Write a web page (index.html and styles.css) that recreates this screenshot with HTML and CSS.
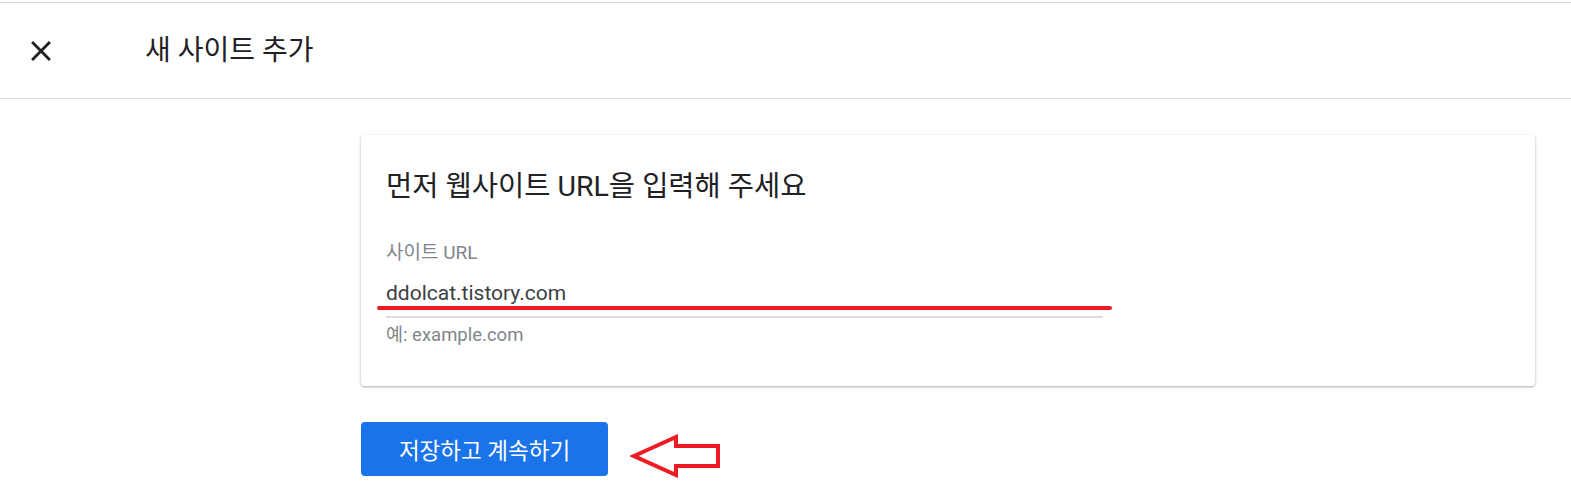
FILE: index.html
```html
<!DOCTYPE html>
<html lang="ko">
<head>
    <meta charset="UTF-8">
    <meta name="viewport" content="width=device-width, initial-scale=1.0">
    <title>새 사이트 추가</title>
    <link rel="stylesheet" href="styles.css">
</head>
<body>
    <header class="top-bar">
        <button class="close-btn" aria-label="닫기">
            <svg width="34" height="34" viewBox="0 0 24 24"><path d="M19 6.41L17.59 5 12 10.59 6.41 5 5 6.41 10.59 12 5 17.59 6.41 19 12 13.41 17.59 19 19 17.59 13.41 12z" fill="#202124"/></svg>
        </button>
        <h1 class="page-title">새 사이트 추가</h1>
    </header>

    <main class="content">
        <section class="card">
            <h2 class="card-title">먼저 웹사이트 URL을 입력해 주세요</h2>
            <div class="field">
                <label class="field-label" for="siteUrl">사이트 URL</label>
                <div class="field-input">
                    <input id="siteUrl" type="text" value="ddolcat.tistory.com">
                    <span class="mark-line"></span>
                </div>
                <div class="field-hint">예: example.com</div>
            </div>
        </section>

        <div class="actions">
            <button class="primary-btn">저장하고 계속하기</button>
            <svg class="arrow" width="92" height="44" viewBox="0 0 92 44">
                <path d="M4 22 L46 3 L46 12 L88 12 L88 32 L46 32 L46 41 Z" fill="none" stroke="#ed1c24" stroke-width="4" stroke-linejoin="miter"/>
            </svg>
        </div>
    </main>
</body>
</html>
```

FILE: styles.css
```css
body {
    margin: 0;
    padding-top: 2px;
    font-family: Roboto, "Noto Sans CJK KR", sans-serif;
    color: #202124;
    background-color: #ffffff;
}

.top-bar {
    display: flex;
    align-items: center;
    height: 95px;
    border-top: 1px solid #d6d6d6;
    border-bottom: 1px solid #dadce0;
}

.close-btn {
    display: flex;
    padding: 0;
    margin-left: 24px;
    background: none;
    border: none;
    cursor: pointer;
}

.page-title {
    margin: 0 0 0 87px;
    font-size: 28px;
    font-weight: 400;
    line-height: 36px;
}

.content {
    padding: 36px 36px 0 361px;
}

.card {
    padding: 34px 25px 39px;
    border-radius: 4px;
    box-shadow: 0 1px 3px rgba(60, 64, 67, 0.3), 0 1px 2px rgba(60, 64, 67, 0.15);
}

.card-title {
    margin: 0 0 36px;
    font-size: 28.5px;
    font-weight: 400;
    line-height: 36px;
}

.field {
    width: 717px;
}

.field-label {
    display: block;
    font-size: 19px;
    color: #80868b;
    line-height: 24px;
}

.field-input {
    position: relative;
    margin-top: 16px;
    border-bottom: 2px solid #dadce0;
}

.field-input input {
    display: block;
    width: 100%;
    padding: 0 0 11px;
    border: none;
    outline: none;
    font-family: inherit;
    font-size: 21px;
    line-height: 24px;
    color: #3c4043;
}

.mark-line {
    position: absolute;
    left: -9px;
    right: -9px;
    bottom: 6px;
    height: 4px;
    border-radius: 2px;
    background-color: #ed1c24;
}

.field-hint {
    margin-top: 5px;
    font-size: 18.5px;
    color: #80868b;
    line-height: 24px;
}

.actions {
    display: flex;
    align-items: center;
    gap: 22px;
    margin-top: 34px;
}

.primary-btn {
    width: 247px;
    height: 54px;
    background-color: #1a73e8;
    color: #ffffff;
    border: none;
    border-radius: 4px;
    font-family: inherit;
    font-size: 22.5px;
    cursor: pointer;
}

.arrow {
    margin-top: 14px;
}
```
